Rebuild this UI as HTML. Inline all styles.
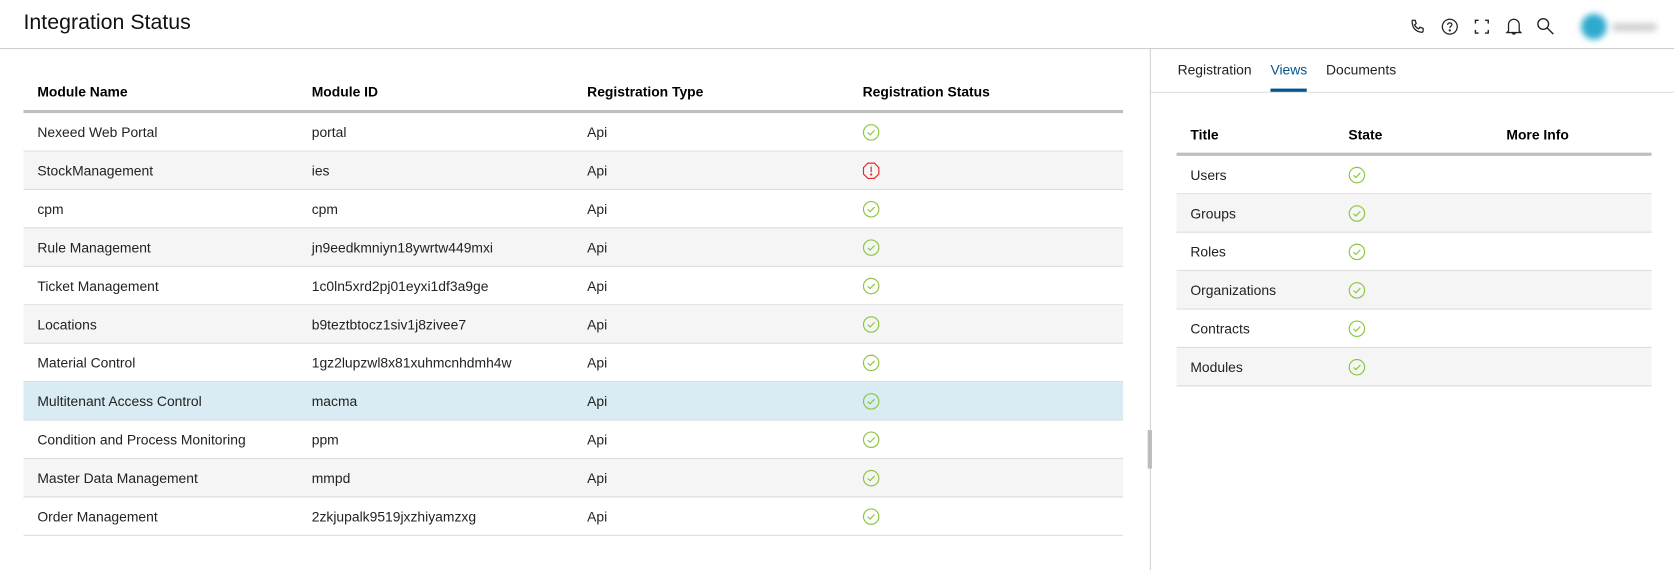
<!DOCTYPE html>
<html><head><meta charset="utf-8"><style>
html,body{margin:0;padding:0;width:1674px;height:570px;overflow:hidden;background:#fff}
#w{position:absolute;left:0;top:0;width:1568px;height:534px;transform:scale(1.06760,1.06742);transform-origin:0 0;font-family:"Liberation Sans",sans-serif;color:#222;font-size:13px}
.abs{position:absolute}
.row{position:absolute;height:35px;border-bottom:1px solid #dcdcdc}
.row span,.hd span{position:absolute;top:50%;transform:translateY(-50%);white-space:nowrap}
.hd span{font-weight:bold;color:#000}
.gray{background:#f5f5f5}
.sel{background:#d9ebf3}
svg.ic{position:absolute;top:50%;margin-top:-8px}
</style></head><body><div id="w">
<div class="abs" style="left:22px;top:10px;font-size:20px;color:#111">Integration Status</div>
<div class="abs" style="left:0;top:45px;width:1568px;height:1px;background:#cfcfcf"></div>
<!-- header icons -->
<svg class="abs" style="left:1320px;top:17px" width="16" height="16" viewBox="0 0 16 16" fill="none" stroke="#222" stroke-width="1.2"><path d="M3 2l2.5 0 1 3-1.5 1.2c.8 1.8 2 3 3.8 3.8L10 8.5l3 1V12c0 .8-.7 1.3-1.5 1.2C6.5 12.6 3.4 9.5 2.8 4.5 2.7 3 2.7 2 3 2z"/></svg>
<svg class="abs" style="left:1350px;top:17px" width="16" height="16" viewBox="0 0 16 16" fill="none" stroke="#222" stroke-width="1.2"><circle cx="8" cy="8" r="7"/><path d="M6 6.3c0-1.2.9-1.9 2-1.9s2 .7 2 1.7c0 1.4-2 1.5-2 3"/><circle cx="8" cy="11.5" r=".5" fill="#222"/></svg>
<svg class="abs" style="left:1381px;top:18px" width="14" height="14" viewBox="0 0 14 14" fill="none" stroke="#222" stroke-width="1.3"><path d="M1 4V1h3M10 1h3v3M13 10v3h-3M4 13H1v-3"/></svg>
<svg class="abs" style="left:1410px;top:16px" width="16" height="18" viewBox="0 0 16 18" fill="none" stroke="#222" stroke-width="1.2"><path d="M3 13V7a5 5 0 0110 0v6l1.5 1.5h-13zM6.5 14.5a1.5 1.5 0 003 0"/></svg>
<svg class="abs" style="left:1439px;top:16px" width="18" height="18" viewBox="0 0 18 18" fill="none" stroke="#222" stroke-width="1.3"><circle cx="6.5" cy="6.5" r="5"/><path d="M10 10l6 6"/></svg>
<div class="abs" style="left:1481px;top:13px;width:24px;height:24px;border-radius:50%;background:#2eaacd;filter:blur(3px)"></div>
<div class="abs" style="left:1510px;top:22px;width:42px;height:7px;border-radius:3px;background:#ccc;filter:blur(3px)"></div>
<!-- left table -->
<div class="row hd" style="left:22px;top:69px;width:1030px;height:34px;border-bottom:3px solid #bfbfbf"><span style="left:13px">Module Name</span><span style="left:270px">Module ID</span><span style="left:528px">Registration Type</span><span style="left:786px">Registration Status</span></div>
<div id="lt"></div>
<!-- divider -->
<div class="abs" style="left:1077px;top:46px;width:1px;height:488px;background:#d0d0d0"></div>
<div class="abs" style="left:1075px;top:403px;width:4px;height:36px;background:#bdbdbd"></div>
<!-- right tabs -->
<div class="abs" style="left:1078px;top:86px;width:490px;height:1px;background:#e0e0e0"></div>
<div class="abs" style="left:1103px;top:58px">Registration</div>
<div class="abs" style="left:1190px;top:58px;color:#005691">Views</div>
<div class="abs" style="left:1190px;top:83px;width:34px;height:3px;background:#005691"></div>
<div class="abs" style="left:1242px;top:58px">Documents</div>
<div class="row hd" style="left:1102px;top:109px;width:445px;height:34px;border-bottom:3px solid #bfbfbf"><span style="left:13px">Title</span><span style="left:161px">State</span><span style="left:309px">More Info</span></div>
<div id="rt"></div>
</div>
<script>
var ck='<svg class="ic" style="left:LPX" width="16" height="16" viewBox="0 0 16 16" fill="none" stroke="#8cc63f" stroke-width="1.1"><circle cx="8" cy="8" r="7.2"/><path d="M4.8 8.2l2.2 2.1 4.2-4.3"/></svg>';
var er='<svg class="ic" style="left:LPX" width="16" height="16" viewBox="0 0 16 16" fill="none" stroke="#e2262f" stroke-width="1.1"><path d="M5 .8h6L15.2 5v6L11 15.2H5L.8 11V5z"/><path d="M8 4v5.2"/><circle cx="8" cy="11.5" r=".5" fill="#e2262f"/></svg>';
var L=[["Nexeed Web Portal","portal"],["StockManagement","ies"],["cpm","cpm"],["Rule Management","jn9eedkmniyn18ywrtw449mxi"],["Ticket Management","1c0ln5xrd2pj01eyxi1df3a9ge"],["Locations","b9teztbtocz1siv1j8zivee7"],["Material Control","1gz2lupzwl8x81xuhmcnhdmh4w"],["Multitenant Access Control","macma"],["Condition and Process Monitoring","ppm"],["Master Data Management","mmpd"],["Order Management","2zkjupalk9519jxzhiyamzxg"]];
var h='';L.forEach(function(r,i){var c=i==7?'sel':(i%2?'gray':'');h+='<div class="row '+c+'" style="left:22px;top:'+(106+i*36)+'px;width:1030px"><span style="left:13px">'+r[0]+'</span><span style="left:270px">'+r[1]+'</span><span style="left:528px">Api</span>'+(i==1?er:ck).replace('LPX','786px')+'</div>';});
document.getElementById('lt').outerHTML=h;
var R=["Users","Groups","Roles","Organizations","Contracts","Modules"];h='';
R.forEach(function(r,i){h+='<div class="row '+(i%2?'gray':'')+'" style="left:1102px;top:'+(146+i*36)+'px;width:445px"><span style="left:13px">'+r+'</span>'+ck.replace('LPX','161px')+'</div>';});
document.getElementById('rt').outerHTML=h;
</script>
</body></html>
